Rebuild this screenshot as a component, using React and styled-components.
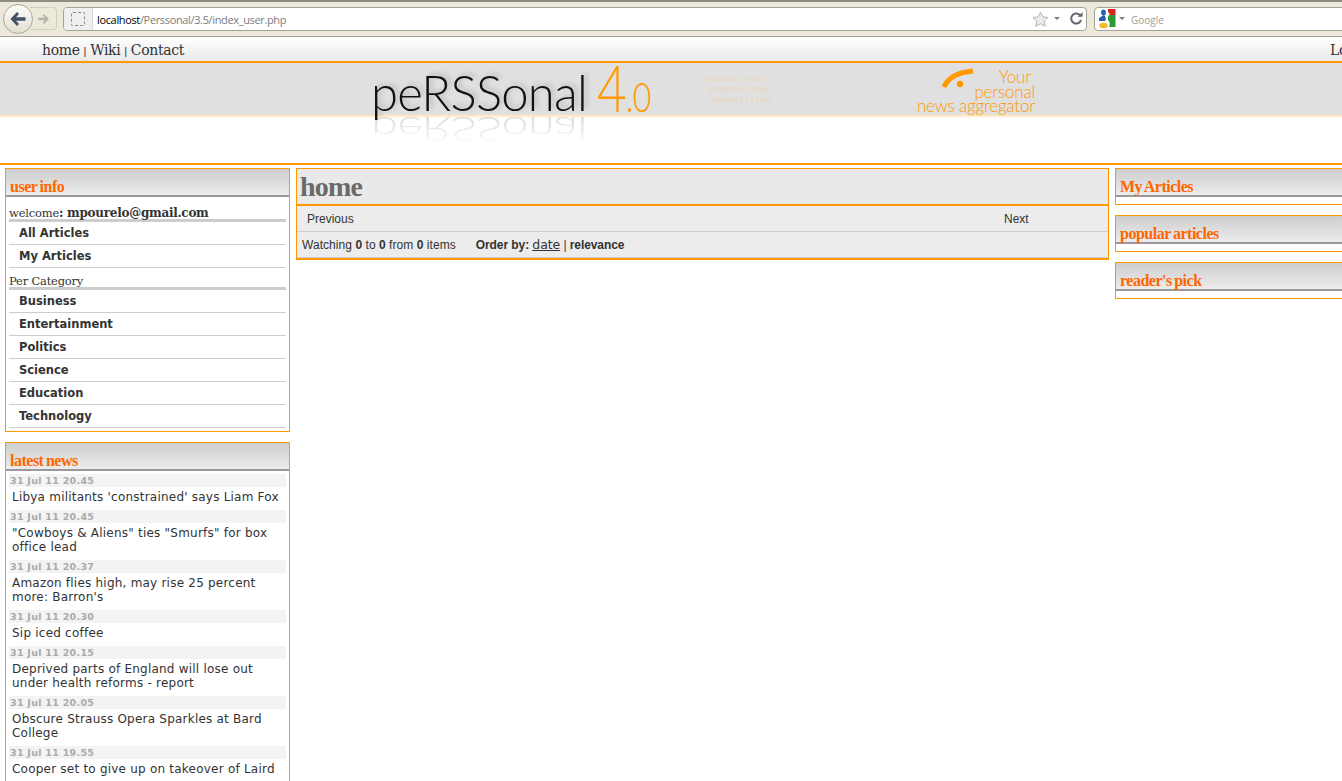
import React from 'react';
import styled, { createGlobalStyle } from 'styled-components';

const GlobalStyle = createGlobalStyle`
  html, body {
    margin: 0;
    padding: 0;
    height: 781px;
    overflow: hidden;
    background: #fff;
    font-family: "Liberation Sans", Arial, sans-serif;
  }
`;

const Page = styled.div`
  width: 1342px;
  height: 781px;
  overflow: hidden;
`;

/* browser chrome */
const Chrome = styled.div`
  height: 37px;
  box-sizing: border-box;
  background: #ece9da;
  border-top: 2px solid #8f8c80;
  border-bottom: 1px solid #a5a295;
  display: flex;
  align-items: center;
  padding: 0 0 1px 3px;
`;

const BackButton = styled.div`
  width: 30px;
  height: 30px;
  box-sizing: border-box;
  flex-shrink: 0;
  border-radius: 50%;
  border: 1px solid #a9a79c;
  background: linear-gradient(#fdfdfb, #e2dfd2);
  display: flex;
  align-items: center;
  justify-content: center;
  position: relative;
  z-index: 1;
`;

const ForwardButton = styled.div`
  width: 27px;
  height: 23px;
  flex-shrink: 0;
  margin-left: -3px;
  box-sizing: border-box;
  border: 1px solid #d2cfc0;
  border-left: none;
  border-radius: 0 4px 4px 0;
  display: flex;
  align-items: center;
  justify-content: flex-end;
  padding-right: 6px;
`;

const UrlBar = styled.div`
  width: 1024px;
  height: 24px;
  flex-shrink: 0;
  margin-left: 6px;
  box-sizing: border-box;
  background: #fff;
  border: 1px solid #a5a295;
  border-radius: 4px;
  display: flex;
  align-items: center;
  overflow: hidden;
`;

const Identity = styled.div`
  width: 29px;
  height: 100%;
  box-sizing: border-box;
  background: #efefef;
  border-right: 1px solid #d8d8d8;
  display: flex;
  align-items: center;
  justify-content: center;
`;

const DashedSquare = styled.div`
  width: 12px;
  height: 12px;
  border: 1px dashed #8a8a8a;
  border-radius: 2px;
`;

const UrlText = styled.div`
  flex: 1;
  margin-left: 4px;
  padding-top: 2px;
  font-family: "Open Sans", sans-serif;
  font-size: 11px;
  letter-spacing: -0.35px;
  color: #7d7d7d;
  white-space: nowrap;

  b {
    font-weight: 400;
    color: #000;
  }
`;

const UrlIcons = styled.div`
  display: flex;
  align-items: center;
  gap: 5px;
  padding-right: 3px;
`;

const DropTriangle = styled.span`
  width: 0;
  height: 0;
  border-left: 3px solid transparent;
  border-right: 3px solid transparent;
  border-top: 3px solid #808080;
  margin: ${p => p.$margin};
`;

const SearchBar = styled.div`
  width: 260px;
  height: 24px;
  margin-left: 7px;
  flex-shrink: 0;
  box-sizing: border-box;
  background: #fff;
  border: 1px solid #a5a295;
  border-radius: 4px;
  display: flex;
  align-items: center;
  padding-left: 4px;
  font-family: "Open Sans", sans-serif;
  font-size: 10px;
  color: #a09d90;

  span:last-child {
    padding-top: 2px;
  }
`;

/* site header */
const TopNav = styled.nav`
  height: 24px;
  box-sizing: border-box;
  background: linear-gradient(#ffffff, #e9e9e9);
  display: flex;
  justify-content: space-between;
  align-items: center;
  padding: 2px 0 0 42px;
  width: 1400px;
  font-family: "DejaVu Serif", serif;
  font-size: 14px;
  letter-spacing: -0.35px;
  color: #333;
`;

const NavLinks = styled.div`
  display: flex;
  align-items: center;
  gap: 4px;
  font-weight: 300;

  i {
    font-style: normal;
    font-family: "Liberation Sans", sans-serif;
    font-size: 11px;
    position: relative;
    top: 1px;
  }
`;

const NavRight = styled.div`
  width: 70px;
`;

const Banner = styled.header`
  height: 104px;
  box-sizing: border-box;
  border-top: 2px solid #ff9900;
  border-bottom: 2px solid #ff9900;
  background: linear-gradient(
    #e0e0e0 0,
    #e0e0e0 51px,
    #fde3b8 52px,
    #fde9c8 53px,
    #fff 55px,
    #fff 100%
  );
  display: flex;
  align-items: flex-start;
`;

const Logo = styled.div`
  margin: 0 0 0 371px;
  width: 281px;
  height: 60px;
  display: flex;
  align-items: baseline;
  white-space: nowrap;
  font-family: "Lato", sans-serif;
  font-weight: 300;
  position: relative;
`;

const LogoName = styled.div`
  font-size: 49px;
  line-height: 46px;
  letter-spacing: -0.7px;
  color: #111;
  text-shadow: 3px -2px 5px rgba(0, 0, 0, 0.2);
`;

const LogoReflection = styled(LogoName)`
  position: absolute;
  left: 0;
  top: 44px;
  transform: scaleY(-0.68);
  opacity: 0.16;
  text-shadow: none;
  -webkit-mask-image: linear-gradient(to top, #000, transparent);
  mask-image: linear-gradient(to top, #000, transparent);
`;

const LogoVersion = styled.div`
  color: #ff9900;
  font-size: 66px;
  line-height: 46px;
  margin-left: 10px;
  letter-spacing: -1px;
  transform: translateY(1px) scaleX(0.78);
  transform-origin: left;

  small {
    font-size: 41px;
  }
`;

const CodeDots = styled.div`
  margin: 12px 0 0 53px;
  width: 70px;
  font-family: "Liberation Mono", monospace;
  font-size: 8px;
  line-height: 10px;
  letter-spacing: 0.6px;
  color: #ecd5b5;
  white-space: nowrap;
  flex-shrink: 0;
`;

const CodeLine = styled.div`
  margin-left: ${p => p.$indent}px;
`;

const Tagline = styled.div`
  margin: 7px 0 0 138px;
  width: 122px;
  position: relative;
  text-align: right;
  font-family: "Lato", sans-serif;
  font-weight: 300;
  font-size: 17px;
  line-height: 14.5px;
  letter-spacing: -0.2px;
  color: #ff9900;
  white-space: nowrap;
  flex-shrink: 0;

  svg {
    position: absolute;
    left: 29px;
    top: -4px;
  }

  em {
    font-style: normal;
    margin-right: 4px;
  }
`;

/* columns */
const Columns = styled.div`
  width: 1410px;
  display: grid;
  grid-template-columns: 285px 813px 295px;
  column-gap: 6px;
  padding: 3px 0 0 5px;
`;

const Column = styled.div`
  display: flex;
  flex-direction: column;
  gap: 10px;
`;

const Box = styled.section`
  border: 1px solid #ff9900;
  background: #fff;
`;

const BoxTitle = styled.h2`
  margin: 0;
  height: 26px;
  padding: 0 0 0 4px;
  background: linear-gradient(#cdcdcd, #ececec);
  border-bottom: 2px solid #999;
  font-family: "Liberation Serif", Georgia, serif;
  font-size: 16px;
  font-weight: 700;
  letter-spacing: -0.5px;
  word-spacing: -1px;
  line-height: 36px;
  color: #ff6600;
`;

const RightBody = styled.div`
  height: 7px;
`;

const BoxBody = styled.div`
  padding: 0 3px;
`;

const BoxEnd = styled.div`
  height: 3px;
`;

const SectionLabel = styled.div`
  height: ${p => p.$height}px;
  box-sizing: border-box;
  border-bottom: 3px solid #cdcdcd;
  font-family: "DejaVu Serif", serif;
  font-size: 11.5px;
  letter-spacing: -0.2px;
  line-height: 19px;
  color: #333;
  padding-top: ${p => p.$top}px;
  white-space: nowrap;

  b {
    letter-spacing: -0.28px;
    font-weight: 700;
    font-size: 12px;
  }
`;

const MenuItem = styled.div`
  height: 23px;
  box-sizing: border-box;
  border-bottom: 1px solid #cdcdcd;
  padding-left: 10px;
  font-family: "DejaVu Sans", Verdana, sans-serif;
  font-size: 11.5px;
  font-weight: 700;
  line-height: 23px;
  color: #333;
`;

const NewsDate = styled.div`
  height: 13px;
  background: #f3f3f3;
  margin-top: ${p => (p.$first ? 3 : 0)}px;
  padding-left: 1px;
  font-family: "DejaVu Sans", Verdana, sans-serif;
  font-size: 9.5px;
  font-weight: 700;
  line-height: 13px;
  letter-spacing: 0.28px;
  color: #aaa;
`;

const NewsText = styled.div`
  padding: 3px 3px 6px;
  font-family: "DejaVu Sans", Verdana, sans-serif;
  font-size: 12px;
  line-height: 14px;
  letter-spacing: 0.22px;
  color: #333;
`;

/* main panel */
const MainPanel = styled.main`
  align-self: start;
  border: 1px solid #ff9900;
  border-bottom-width: 2px;
  background: #ececec;
`;

const MainTitle = styled.h1`
  margin: 0;
  height: 35px;
  padding-left: 3px;
  background: #e9e9e9;
  border-bottom: 2px solid #ff9900;
  font-family: "Liberation Serif", Georgia, serif;
  font-size: 28px;
  font-weight: 700;
  letter-spacing: -0.8px;
  line-height: 36px;
  color: #6a6a6a;
`;

const PagerRow = styled.div`
  height: 25px;
  border-bottom: 1px solid #cdcdcd;
  display: flex;
  align-items: center;
  padding-left: 10px;
  font-size: 12px;
  color: #333;
`;

const PagerLink = styled.span`
  width: ${p => p.$width}px;
`;

const StatusRow = styled.div`
  height: 25px;
  border-bottom: 1px solid #cdcdcd;
  display: flex;
  align-items: center;
  padding-left: 5px;
  font-size: 12px;
  letter-spacing: 0.05px;
  color: #333;
  white-space: nowrap;
`;

const OrderBy = styled.span`
  margin-left: 20px;
  letter-spacing: -0.08px;

  u {
    font-family: "DejaVu Sans", Verdana, sans-serif;
    font-size: 12.5px;
  }
`;

const news = [
  ['31 Jul 11 20.45', "Libya militants 'constrained' says Liam Fox"],
  ['31 Jul 11 20.45', '"Cowboys & Aliens" ties "Smurfs" for box office lead'],
  ['31 Jul 11 20.37', "Amazon flies high, may rise 25 percent more: Barron's"],
  ['31 Jul 11 20.30', 'Sip iced coffee'],
  ['31 Jul 11 20.15', 'Deprived parts of England will lose out under health reforms - report'],
  ['31 Jul 11 20.05', 'Obscure Strauss Opera Sparkles at Bard College'],
  ['31 Jul 11 19.55', 'Cooper set to give up on takeover of Laird'],
];

const categories = ['Business', 'Entertainment', 'Politics', 'Science', 'Education', 'Technology'];

const BackIcon = () => (
  <svg width="18" height="16" viewBox="0 0 18 16">
    <path d="M8 1 L1.5 8 L8 15 L10 13 L7 9.8 H16.5 V6.2 H7 L10 3 Z" fill="#3f5266" />
  </svg>
);

const ForwardIcon = () => (
  <svg width="13" height="12" viewBox="0 0 18 16">
    <path d="M10 1 L16.5 8 L10 15 L8 13 L11 9.8 H1.5 V6.2 H11 L8 3 Z" fill="#b5b5ae" />
  </svg>
);

const StarIcon = () => (
  <svg width="17" height="16" viewBox="0 0 17 16">
    <path d="M8.5 1 L10.8 5.8 L16 6.5 L12.2 10.1 L13.2 15.2 L8.5 12.7 L3.8 15.2 L4.8 10.1 L1 6.5 L6.2 5.8 Z" fill="#ececec" stroke="#b4b4b4" />
  </svg>
);

const ReloadIcon = () => (
  <svg width="13" height="13" viewBox="0 0 13 13">
    <path d="M10.5 4 A5 5 0 1 0 11 8" fill="none" stroke="#666" strokeWidth="2" />
    <path d="M7.5 4.8 H12.5 V0 Z" fill="#666" />
  </svg>
);

const GoogleIcon = () => (
  <svg width="17" height="20" viewBox="0 0 17 20">
    <path d="M9 0 H16.5 V6 H11 Q10 3 9 3 Z" fill="#d9231c" />
    <path d="M10 6 H16.5 V18 H10 Q12 14 9 11 Q8 8 10 6 Z" fill="#2f9a32" />
    <ellipse cx="4.5" cy="3.5" rx="2.4" ry="3" fill="#1d62b8" />
    <path d="M0 9 L5 6 Q8 9 6 12 H0 Z" fill="#2a5fa8" />
    <ellipse cx="4.5" cy="16.5" rx="4.2" ry="2.8" fill="#f3bd26" />
  </svg>
);

const RssIcon = () => (
  <svg width="32" height="26" viewBox="0 0 32 26">
    <path d="M2 21 Q8 7 31 5" fill="none" stroke="#ff9900" strokeWidth="5" />
    <circle cx="18" cy="18" r="3.2" fill="#ff9900" />
  </svg>
);

const App = () => (
  <Page>
    <GlobalStyle />
    <Chrome>
      <BackButton><BackIcon /></BackButton>
      <ForwardButton><ForwardIcon /></ForwardButton>
      <UrlBar>
        <Identity><DashedSquare /></Identity>
        <UrlText><b>localhost</b>/Perssonal/3.5/index_user.php</UrlText>
        <UrlIcons>
          <StarIcon />
          <DropTriangle $margin="0 5px 0 0" />
          <ReloadIcon />
        </UrlIcons>
      </UrlBar>
      <SearchBar>
        <GoogleIcon />
        <DropTriangle $margin="0 6px 0 3px" />
        <span>Google</span>
      </SearchBar>
    </Chrome>

    <TopNav>
      <NavLinks>
        home <i>|</i> Wiki <i>|</i> Contact
      </NavLinks>
      <NavRight>Logout</NavRight>
    </TopNav>

    <Banner>
      <Logo>
        <LogoName>peRSSonal</LogoName>
        <LogoReflection aria-hidden="true">peRSSonal</LogoReflection>
        <LogoVersion>4<small>.0</small></LogoVersion>
      </Logo>
      <CodeDots>
        <CodeLine $indent={0}>10010111100</CodeLine>
        <CodeLine $indent={4}>10010111100</CodeLine>
        <CodeLine $indent={7}>10010111100</CodeLine>
      </CodeDots>
      <Tagline>
        <RssIcon />
        <em>Your</em><br />personal<br />news aggregator
      </Tagline>
    </Banner>

    <Columns>
      <Column>
        <Box>
          <BoxTitle>user info</BoxTitle>
          <BoxBody>
            <SectionLabel $height={25} $top={7}>welcome<b>: mpourelo@gmail.com</b></SectionLabel>
            <MenuItem>All Articles</MenuItem>
            <MenuItem>My Articles</MenuItem>
            <SectionLabel $height={22} $top={4}>Per Category</SectionLabel>
            {categories.map(c => <MenuItem key={c}>{c}</MenuItem>)}
            <BoxEnd />
          </BoxBody>
        </Box>
        <Box>
          <BoxTitle>latest news</BoxTitle>
          <BoxBody>
            {news.map(([date, text], i) => (
              <div key={i}>
                <NewsDate $first={i === 0}>{date}</NewsDate>
                <NewsText>{text}</NewsText>
              </div>
            ))}
          </BoxBody>
        </Box>
      </Column>

      <MainPanel>
        <MainTitle>home</MainTitle>
        <PagerRow>
          <PagerLink $width={697}>Previous</PagerLink>
          <PagerLink $width={40}>Next</PagerLink>
        </PagerRow>
        <StatusRow>
          <span>Watching <b>0</b> to <b>0</b> from <b>0</b> items</span>
          <OrderBy><b>Order by:</b> <u>date</u> | <b>relevance</b></OrderBy>
        </StatusRow>
      </MainPanel>

      <Column>
        <Box>
          <BoxTitle>My Articles</BoxTitle>
          <RightBody />
        </Box>
        <Box>
          <BoxTitle>popular articles</BoxTitle>
          <RightBody />
        </Box>
        <Box>
          <BoxTitle>reader's pick</BoxTitle>
          <RightBody />
        </Box>
      </Column>
    </Columns>
  </Page>
);

export default App;
